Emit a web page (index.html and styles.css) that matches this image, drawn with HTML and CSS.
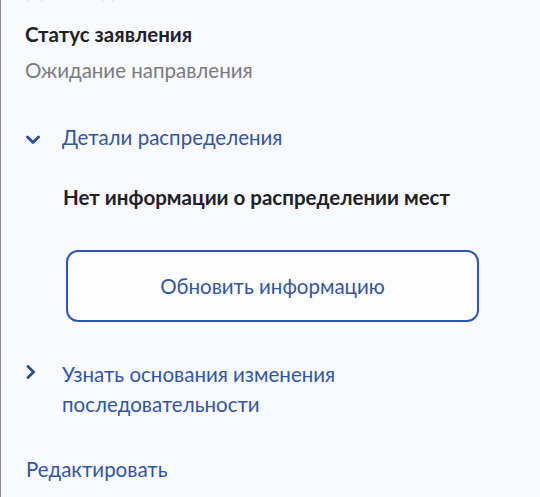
FILE: index.html
```html
<!DOCTYPE html>
<html lang="ru">
<head>
    <meta charset="UTF-8">
    <meta name="viewport" content="width=device-width, initial-scale=1.0">
    <title>Статус заявления</title>
    <link rel="stylesheet" href="styles.css">
</head>
<body>
    <div class="page">
        <div class="cut-off">Дата подачи заявления</div>

        <!-- Status -->
        <div class="status">
            <h3 class="status-title">Статус заявления</h3>
            <p class="status-value">Ожидание направления</p>
        </div>

        <!-- Distribution details -->
        <div class="toggle open">
            <svg class="chev" width="14" height="10" viewBox="0 0 14 10">
                <path d="M1.5 2 L7 7.5 L12.5 2" fill="none" stroke="#2c4a95" stroke-width="2.8" stroke-linecap="round" stroke-linejoin="round"/>
            </svg>
            <span>Детали распределения</span>
        </div>
        <div class="details">
            <p class="details-empty">Нет информации о распределении мест</p>
            <button class="btn-outline">Обновить информацию</button>
        </div>

        <div class="toggle more">
            <svg class="chev" width="14" height="14" viewBox="0 0 14 14">
                <path d="M2 1.5 L7.5 7 L2 12.5" fill="none" stroke="#2c4a95" stroke-width="2.8" stroke-linecap="round" stroke-linejoin="round"/>
            </svg>
            <span>Узнать основания изменения последовательности</span>
        </div>

        <a class="edit-link" href="#">Редактировать</a>
    </div>
</body>
</html>
```

FILE: styles.css
```css
html, body {
    margin: 0;
    height: 100%;
}
body {
    font-family: Lato, "Noto Sans", sans-serif;
    font-size: 20.5px;
    background-color: #f8faff;
    border-left: 1px solid #8a8a8a;
    box-sizing: border-box;
    overflow: hidden;
}
.page {
    padding: 0 24px;
}
.cut-off {
    line-height: 24px;
    margin-top: -22px;
    color: #e6e9f0;
    padding-left: 2px;
}
.status {
    margin-top: 20px;
}
.status-title {
    margin: 0;
    font-size: 20.5px;
    font-weight: 700;
    line-height: 24px;
    color: #1f2126;
}
.status-value {
    margin: 12px 0 0;
    line-height: 24px;
    color: #7a7c80;
}
.toggle {
    display: flex;
    align-items: flex-start;
    gap: 22px;
    margin-top: 43px;
    line-height: 24px;
    color: #34569f;
    padding-left: 1px;
}
.toggle span {
    max-width: 320px;
}
.toggle .chev {
    flex-shrink: 0;
    margin-top: 10px;
}
.details {
    padding-left: 38px;
    margin-top: 36px;
}
.details-empty {
    margin: 0;
    font-weight: 700;
    line-height: 24px;
    color: #1f2126;
}
.btn-outline {
    display: block;
    width: 413px;
    height: 72px;
    margin-top: 41px;
    margin-left: 3px;
    border: 2px solid #2d55b3;
    border-radius: 12px;
    background-color: #fdfdff;
    font-family: inherit;
    font-size: 20.5px;
    color: #34569f;
}
.toggle.more {
    margin-top: 37px;
    line-height: 30px;
}
.toggle.more .chev {
    margin-top: 6px;
}
.edit-link {
    display: block;
    margin-top: 38px;
    padding-left: 1px;
    line-height: 24px;
    color: #34569f;
    text-decoration: none;
}
```
